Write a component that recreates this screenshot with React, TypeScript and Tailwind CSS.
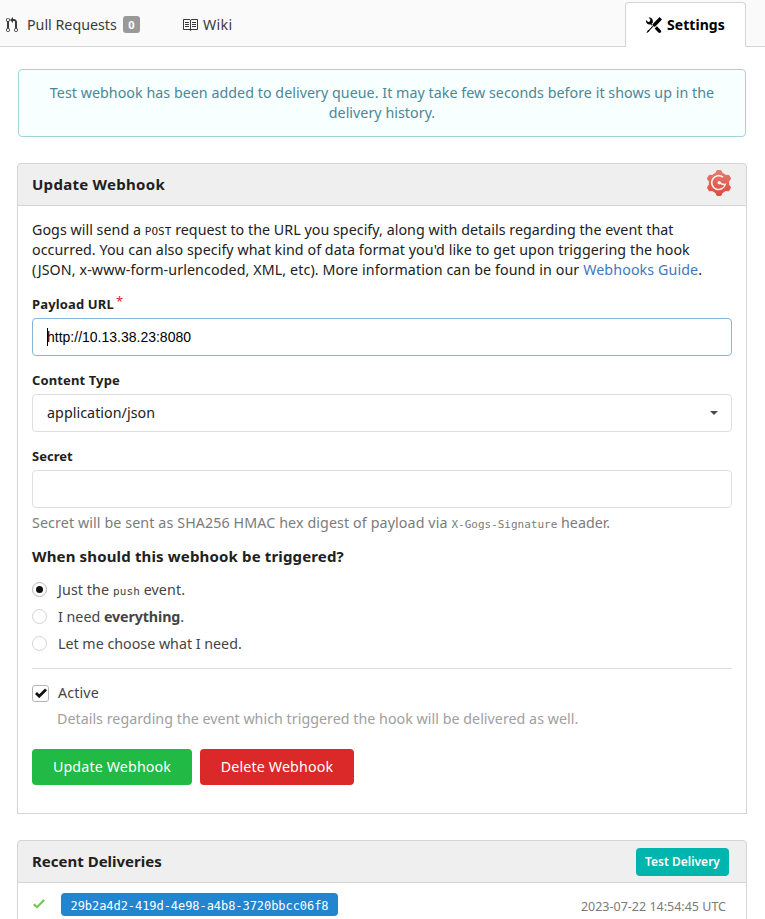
import React from "react";

const ui = "font-['Noto_Sans',sans-serif]";
const mono = "font-['DejaVu_Sans_Mono',monospace] leading-none";

function PullRequestIcon() {
  return (
    <svg viewBox="0 0 12 16" className="h-4 w-3 shrink-0" fill="currentColor">
      <path d="M11 11.28V5c-.03-.78-.34-1.47-.94-2.06C9.46 2.35 8.78 2.03 8 2H7V0L4 3l3 3V4h1c.27.02.48.11.69.31.21.2.3.42.31.69v6.28A1.993 1.993 0 0 0 10 15a1.993 1.993 0 0 0 1-3.72zm-1 2.92c-.66 0-1.2-.55-1.2-1.2 0-.65.55-1.2 1.2-1.2.65 0 1.2.55 1.2 1.2 0 .65-.55 1.2-1.2 1.2zM4 3c0-1.11-.89-2-2-2a1.993 1.993 0 0 0-1 3.72v6.56A1.993 1.993 0 0 0 2 15a1.993 1.993 0 0 0 1-3.72V4.72c.59-.34 1-.98 1-1.72zm-.8 10c0 .66-.55 1.2-1.2 1.2-.65 0-1.2-.55-1.2-1.2 0-.65.55-1.2 1.2-1.2.65 0 1.2.55 1.2 1.2zM2 4.2C1.34 4.2.8 3.65.8 3c0-.65.55-1.2 1.2-1.2.65 0 1.2.55 1.2 1.2 0 .65-.55 1.2-1.2 1.2z" />
    </svg>
  );
}

function BookIcon() {
  return (
    <svg viewBox="0 0 16 16" className="size-4 shrink-0" fill="currentColor">
      <path d="M3 5h4v1H3V5zm0 3h4V7H3v1zm0 2h4V9H3v1zm11-5h-4v1h4V5zm0 2h-4v1h4V7zm0 2h-4v1h4V9zm2-6v9c0 .55-.45 1-1 1H9.5l-1 1-1-1H2c-.55 0-1-.45-1-1V3c0-.55.45-1 1-1h5.5l1 1 1-1H15c.55 0 1 .45 1 1zm-8 .5L7.5 3H2v9h6V3.5zm7-.5H9.5l-.5.5V12h6V3z" />
    </svg>
  );
}

function ToolsIcon() {
  return (
    <svg viewBox="0 0 16 16" className="size-4 shrink-0" fill="currentColor">
      <path d="M4.48 7.27c.26.26 1.28 1.33 1.28 1.33l.56-.58-.88-.91 1.69-1.8s-.76-.74-.43-.45c.32-1.19.03-2.51-.87-3.44C4.93.5 3.66.2 2.52.51l1.93 2-.51 1.96-1.89.52-1.93-1.99C-.19 4.17.1 5.48 1 6.4c.94.98 2.29 1.26 3.48.87zm6.44 1.94l-2.33 2.3 3.84 3.98c.31.33.73.49 1.14.49.41 0 .82-.16 1.14-.49.63-.65.63-1.7 0-2.35l-3.79-3.93zM16 2.53L13.55 0 6.33 7.46l.88.91-4.31 4.46-.99.53-1.39 2.27.35.37 2.2-1.44.51-1.02L7.9 9.08l.88.91L16 2.53z" />
    </svg>
  );
}

function GogsLogo() {
  return (
    <svg viewBox="0 0 26 26" className="size-[26px]">
      <defs>
        <linearGradient id="gear" gradientUnits="userSpaceOnUse" x1="0" y1="0" x2="0" y2="26">
          <stop offset="0" stopColor="#e67b70" />
          <stop offset="1" stopColor="#df4b3f" />
        </linearGradient>
      </defs>
      <path
        d="M10.2 1.2Q10.6 0 11.8 0H14.2Q15.4 0 15.8 1.2L16.6 3Q18.4 3.7 19.7 4.9L21.7 4.7Q22.8 4.6 23.4 5.6L24.7 7.8Q25.3 8.8 24.5 9.7L23.1 11.3Q23.4 13 23.1 14.7L24.5 16.3Q25.3 17.2 24.7 18.2L23.4 20.4Q22.8 21.4 21.7 21.3L19.7 21.1Q18.4 22.3 16.6 23L15.8 24.8Q15.4 26 14.2 26H11.8Q10.6 26 10.2 24.8L9.4 23Q7.6 22.3 6.3 21.1L4.3 21.3Q3.2 21.4 2.6 20.4L1.3 18.2Q.7 17.2 1.5 16.3L2.9 14.7Q2.6 13 2.9 11.3L1.5 9.7Q.7 8.8 1.3 7.8L2.6 5.6Q3.2 4.6 4.3 4.7L6.3 4.9Q7.6 3.7 9.4 3Z"
        fill="url(#gear)"
      />
      <path d="M17 7.2A6.9 6.9 0 1 0 19.3 14.4Q16 14.8 13.4 12.6" fill="none" stroke="#fbeeec" strokeWidth="1.6" />
      <circle cx="13.3" cy="12.8" r="1.8" fill="#fbeeec" />
    </svg>
  );
}

function Radio({ checked = false, children }: { checked?: boolean; children: React.ReactNode }) {
  return (
    <div className="flex h-[27px] items-center text-[#444]">
      <span
        className={
          checked
            ? "mr-[11px] flex size-[15px] items-center justify-center rounded-full border border-[#b5b5b6]"
            : "mr-[11px] flex size-[15px] items-center justify-center rounded-full border border-[#d4d4d5]"
        }
      >
        {checked && <span className="size-[7px] rounded-full bg-[#111]" />}
      </span>
      {children}
    </div>
  );
}

export default function App() {
  return (
    <div className={`${ui} h-[919px] w-[765px] overflow-hidden bg-white text-[14.25px] leading-5 whitespace-nowrap text-[#212121]`}>
      <nav className="flex h-[47px] border-b border-[#d4d4d5] bg-[#fafafa] text-[#3a3a3a]">
        <div className="flex w-[177px] items-center pt-[3px] pl-[6px]">
          <PullRequestIcon />
          <span className="ml-[9px]">Pull Requests</span>
          <span className="ml-[6px] flex h-[17px] w-[17px] items-center justify-center rounded-[3px] bg-[#999] text-[11px] font-bold text-white">0</span>
        </div>
        <div className="flex grow items-center pt-[3px] pl-[5px]">
          <BookIcon />
          <span className="ml-[5px] tracking-[0.3px]">Wiki</span>
        </div>
        <div className="mt-[2px] mr-[19px] -mb-px flex w-[121px] items-center rounded-t-[4px] border border-b-0 border-[#d4d4d5] bg-white pl-[20px] font-bold text-black">
          <ToolsIcon />
          <span className="ml-[5px] text-[14px] tracking-[0.05px]">Settings</span>
        </div>
      </nav>

      <div className="mt-[22px] ml-[18px] h-[68px] w-[728px] rounded-[4px] border border-[#a3d3d8] bg-[#f8ffff] pt-[13px] text-center tracking-[0.042px] text-[#4b8796]">
        <div>Test webhook has been added to delivery queue. It may take few seconds before it shows up in the</div>
        <div>delivery history.</div>
      </div>

      <section className="mt-[26px] ml-[17px] w-[730px]">
        <header className="flex h-[43px] items-center justify-between rounded-t-[4px] border border-[#d4d4d5] bg-[#efefef] px-[14px] pb-[2px]">
          <h4 className="text-[15px] font-bold tracking-[0.28px]">Update Webhook</h4>
          <div className="-mt-[2px]"><GogsLogo /></div>
        </header>
        <div className="h-[608px] border border-t-0 border-[#d4d4d5] px-[14px] pt-[14px]">
          <div>
            <div className="h-5 tracking-[0.04px]">Gogs will send a <code className={`${mono} text-[11px]`}>POST</code> request to the URL you specify, along with details regarding the event that</div>
            <div className="h-5 tracking-[0.06px]">occurred. You can also specify what kind of data format you'd like to get upon triggering the hook</div>
            <div className="h-5 tracking-[0.105px]">(JSON, x-www-form-urlencoded, XML, etc). More information can be found in our <a className="text-[#4078c0]">Webhooks Guide</a>.</div>
          </div>

          <div className="mt-[14px] h-5 text-[13px] font-bold tracking-[0.15px]">
            Payload URL<span className="relative -top-[3px] ml-[2px] font-normal text-[#db2828]">*</span>
          </div>
          <div className="mt-[4px] flex h-[38px] items-center rounded-[4px] border border-[#85b7d9] pl-[14px] font-['Liberation_Sans',sans-serif] text-[14px] text-black">
            <span className="-mr-px h-[18px] w-px bg-black" />http://10.13.38.23:8080
          </div>

          <div className="mt-[14px] h-5 text-[13px] font-bold tracking-[0.12px]">Content Type</div>
          <div className="mt-[4px] flex h-[38px] items-center justify-between rounded-[4px] border border-[#dededf] pr-[13px] pl-[14px] tracking-[0.06px]">
            application/json
            <svg viewBox="0 0 8 4" className="h-1 w-2" fill="#4a4a4a"><path d="M0 0h8L4 4z" /></svg>
          </div>

          <div className="mt-[14px] h-5 text-[13px] font-bold">Secret</div>
          <div className="mt-[4px] h-[38px] rounded-[4px] border border-[#dededf]" />
          <div className="mt-[5px] h-5 text-[#7b7b7b]">
            <span className="tracking-[0.11px]">Secret will be sent as SHA256 HMAC hex digest of payload via </span><code className={`${mono} text-[11px]`}>X-Gogs-Signature</code> header.
          </div>

          <h4 className="mt-[13px] mb-[10px] h-5 text-[15px] font-bold tracking-[0.15px]">When should this webhook be triggered?</h4>
          <Radio checked>
            <span className="tracking-[0.1px]">Just the <code className={`${mono} text-[11px]`}>push</code> event.</span>
          </Radio>
          <Radio><span>I need <b className="tracking-[-0.1px]">everything</b>.</span></Radio>
          <Radio><span>Let me choose what I need.</span></Radio>

          <div className="mt-[11px] h-px bg-[#dededf]" />
          <div className="mt-[14px] flex items-center text-[#444]">
            <span className="mr-[9px] flex size-[17px] items-center justify-center rounded-[3px] border border-[#b5b5b6]">
              <svg viewBox="0 0 12 10" className="h-[10px] w-3"><path d="M1 5l3.2 3.2L11 1.4" fill="none" stroke="#111" strokeWidth="2.8" /></svg>
            </span>
            <span className="tracking-[0.15px]">Active</span>
          </div>
          <div className="mt-[6px] pl-[25px] tracking-[0.03px] text-[#a0a0a0]">Details regarding the event which triggered the hook will be delivered as well.</div>

          <div className="mt-[20px] flex gap-2 text-white">
            <button className="h-9 w-[160px] rounded-[4px] bg-[#21ba45] tracking-[0.14px]">Update Webhook</button>
            <button className="h-9 w-[154px] rounded-[4px] bg-[#db2828] tracking-[0.14px]">Delete Webhook</button>
          </div>
        </div>
      </section>

      <section className="mt-[26px] ml-[17px] w-[730px]">
        <header className="flex h-[43px] items-center justify-between rounded-t-[4px] border border-[#d4d4d5] bg-[#efefef] pr-[17px] pl-[14px]">
          <h4 className="-mt-[2px] text-[15px] font-bold">Recent Deliveries</h4>
          <button className="h-7 w-[93px] rounded-[4px] bg-[#00b5ad] text-[12px] font-semibold text-white">Test Delivery</button>
        </header>
        <div className="flex h-[60px] items-start border-x border-[#d4d4d5] pt-[10px] pl-[15px]">
          <svg viewBox="0 0 12 10" className="mt-[6px] h-[10px] w-3"><path d="M.8 5.2l3.2 3L11.2 1" fill="none" stroke="#6cc644" strokeWidth="2" /></svg>
          <span className={`${mono} ml-[16px] flex h-[23px] w-[277px] items-center justify-center rounded-[4px] bg-[#2185d0] pt-[2px] text-[12px] tracking-[-0.06px] text-white`}>29b2a4d2-419d-4e98-a4b8-3720bbcc06f8</span>
          <span className="mt-[4px] mr-[20px] ml-auto text-[12.5px] text-[#7b7b7b]">2023-07-22 14:54:45 UTC</span>
        </div>
      </section>
    </div>
  );
}
